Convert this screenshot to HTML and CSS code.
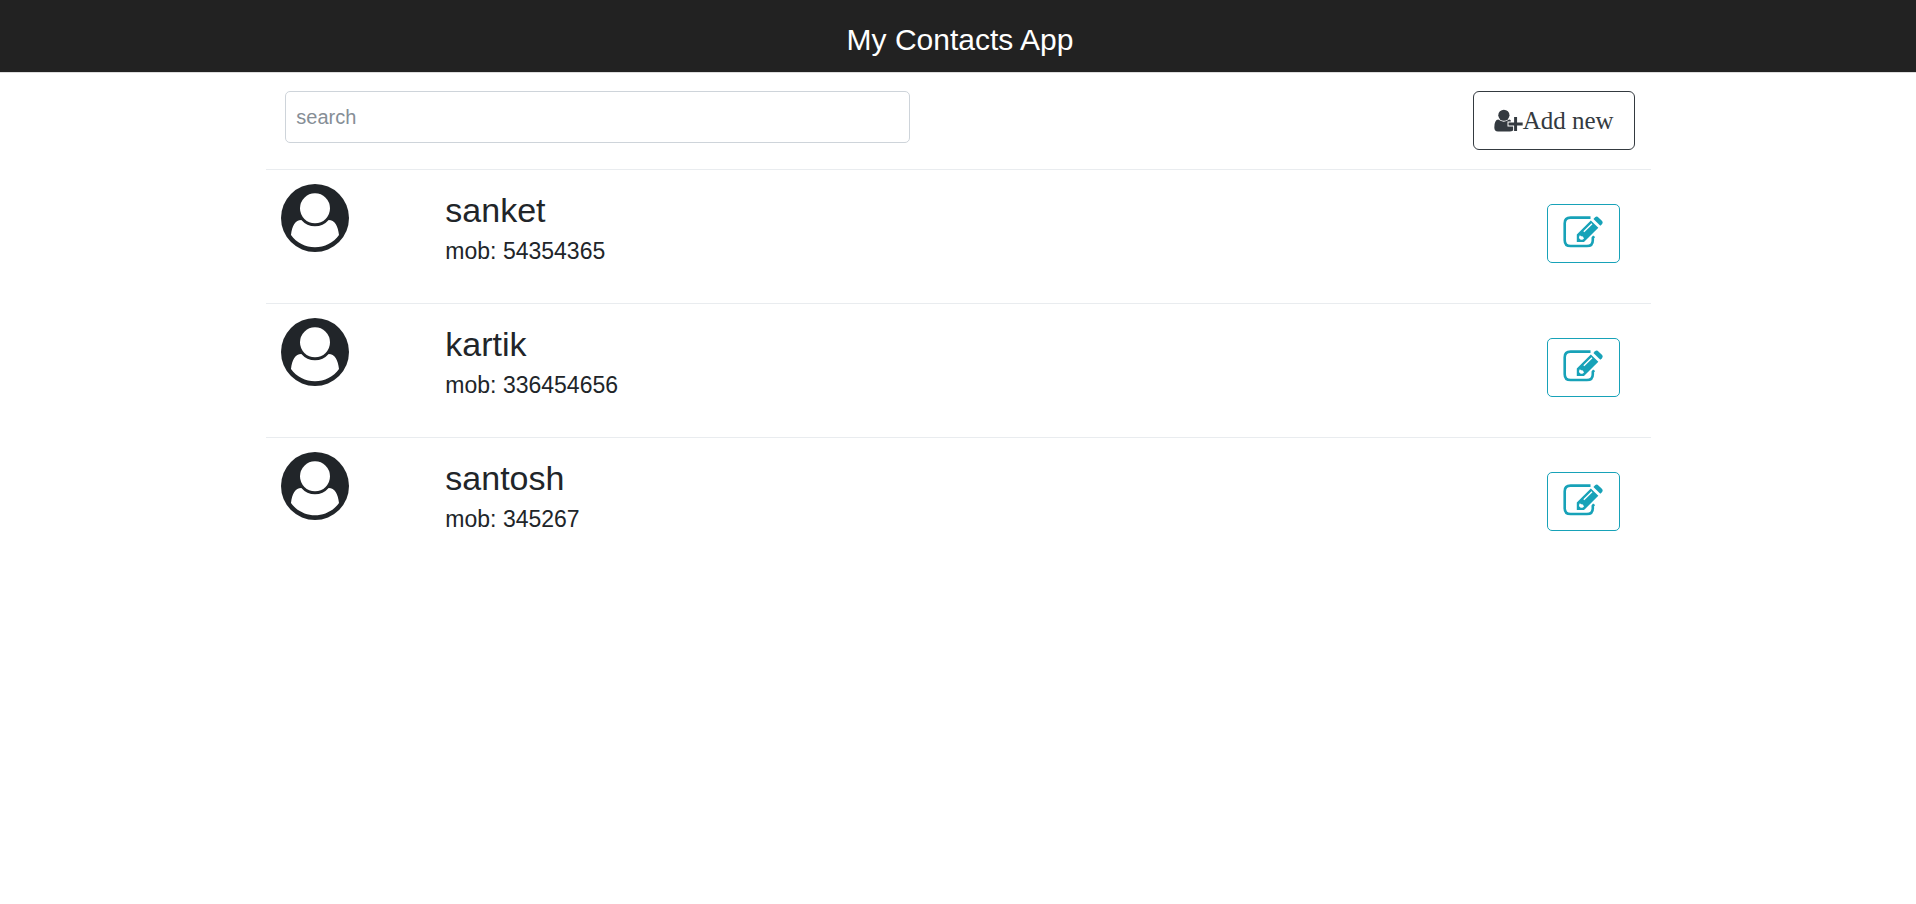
FILE: index.html
```html
<!DOCTYPE html>
<html lang="en">
<head>
<meta charset="utf-8">
<meta name="viewport" content="width=device-width, initial-scale=1">
<title>My Contacts App</title>
<link rel="stylesheet" href="styles.css">
</head>
<body>
<svg class="sprite" aria-hidden="true">
  <symbol id="avatar" viewBox="0 0 204 204">
    <circle cx="102" cy="102" r="102" fill="currentColor"/>
    <circle cx="102" cy="73" r="45" fill="#fff"/>
    <path d="M30 153C33 125 43 108 61 108A54 54 0 0 0 143 108C161 108 171 125 174 153C158 176 130 190 102 190C74 190 46 176 30 153Z" fill="#fff"/>
  </symbol>
  <symbol id="edit" viewBox="130 75 122 98">
    <path d="M214 80H153Q135 80 135 97V149Q135 167 153 167H203Q221 167 221 149V142L225 137" fill="none" stroke="currentColor" stroke-width="8"/>
    <path fill="currentColor" fill-rule="evenodd" d="M215 89L238 111L194 155H172V132ZM217 97L192 122L195 125L220 100ZM181 134L179 139V143L184 148H189L194 145L191 138L186 137Z"/>
    <path fill="currentColor" d="M223 84L228 79Q233 74 239 80L248 89Q254 95 249 100L244 105Z"/>
  </symbol>
</svg>
<header class="topbar"><h1 class="topbar-title">My Contacts App</h1></header>
<main class="container">
  <div class="toolbar">
    <input class="search" type="search" placeholder="search" aria-label="Search contacts">
    <button class="btn btn-add" type="button">
      <svg class="icon-add" viewBox="162 117 88 68" aria-hidden="true">
        <circle cx="192" cy="135" r="17" fill="currentColor"/>
        <path d="M175 148Q192 161 208 148Q211 148 213 151V154H203V169H220V181Q215 184 210 184H174Q163 184 163 172Q163 149 175 148Z" fill="currentColor"/>
        <path d="M223 140H232V157H249V166H232V183H223V166H206V157H223Z" fill="currentColor"/>
      </svg>Add new</button>
  </div>
  <ul class="contacts">
    <li class="contact">
      <svg class="avatar" aria-hidden="true"><use href="#avatar"/></svg>
      <div class="details"><h2 class="name">sanket</h2><p class="phone">mob: 54354365</p></div>
      <button class="btn btn-edit" type="button" aria-label="Edit sanket"><svg class="icon-edit" aria-hidden="true"><use href="#edit"/></svg></button>
    </li>
    <li class="contact">
      <svg class="avatar" aria-hidden="true"><use href="#avatar"/></svg>
      <div class="details"><h2 class="name">kartik</h2><p class="phone">mob: 336454656</p></div>
      <button class="btn btn-edit" type="button" aria-label="Edit kartik"><svg class="icon-edit" aria-hidden="true"><use href="#edit"/></svg></button>
    </li>
    <li class="contact">
      <svg class="avatar" aria-hidden="true"><use href="#avatar"/></svg>
      <div class="details"><h2 class="name">santosh</h2><p class="phone">mob: 345267</p></div>
      <button class="btn btn-edit" type="button" aria-label="Edit santosh"><svg class="icon-edit" aria-hidden="true"><use href="#edit"/></svg></button>
    </li>
  </ul>
</main>
</body>
</html>
```
FILE: styles.css
```css
* { box-sizing: border-box; }

body {
  margin: 0;
  background: #fff;
  color: #212529;
  font-family: "Liberation Sans", Arial, sans-serif;
}

.sprite { display: none; }

.topbar {
  padding: 20px 16px 12px 20px;
  background: #222;
  border-bottom: 1px solid #ddd;
  color: #fff;
  text-align: center;
}

.topbar-title {
  margin: 0;
  font-size: 30px;
  line-height: 40px;
  font-weight: 400;
}

.container {
  width: 72.3%;
  margin: 0 auto;
  padding-left: 1px;
}

.toolbar {
  display: flex;
  justify-content: space-between;
  align-items: flex-start;
  padding: 18px 16px 19px 19px;
}

.search {
  width: 46.3%;
  height: 52px;
  padding: 0 10px;
  border: 1px solid #ced4da;
  border-radius: 5px;
  background: #fff;
  color: #495057;
  font: 20px "Liberation Sans", Arial, sans-serif;
  appearance: none;
}

.search::placeholder { color: #868e96; opacity: 1; }

.btn {
  display: flex;
  align-items: center;
  justify-content: center;
  height: 59px;
  border: 1px solid currentColor;
  background: #fff;
  cursor: pointer;
}

.btn-add {
  padding: 0 20px;
  border-radius: 6px;
  color: #343a40;
  font: 25px "Liberation Serif", "Times New Roman", serif;
}

.icon-add { width: 29px; height: 23px; }

.contacts {
  margin: 0;
  padding: 0;
  list-style: none;
}

.contact {
  display: flex;
  align-items: flex-start;
  min-height: 134px;
  padding: 14px 31px 0 15px;
  border-top: 1px solid #e9ecef;
}

.avatar { width: 68px; height: 68px; }

.details {
  flex: 1;
  margin-left: 96px;
  padding-top: 6px;
}

.name, .phone { margin: 0; font-weight: 400; }
.name { font-size: 34px; line-height: 40px; }
.phone { font-size: 23px; line-height: 42px; }

.btn-edit {
  width: 73px;
  margin-top: 20px;
  padding: 0 0 4px;
  border-radius: 5px;
  color: #17a2b8;
}

.icon-edit { width: 40px; height: 32px; }
```
